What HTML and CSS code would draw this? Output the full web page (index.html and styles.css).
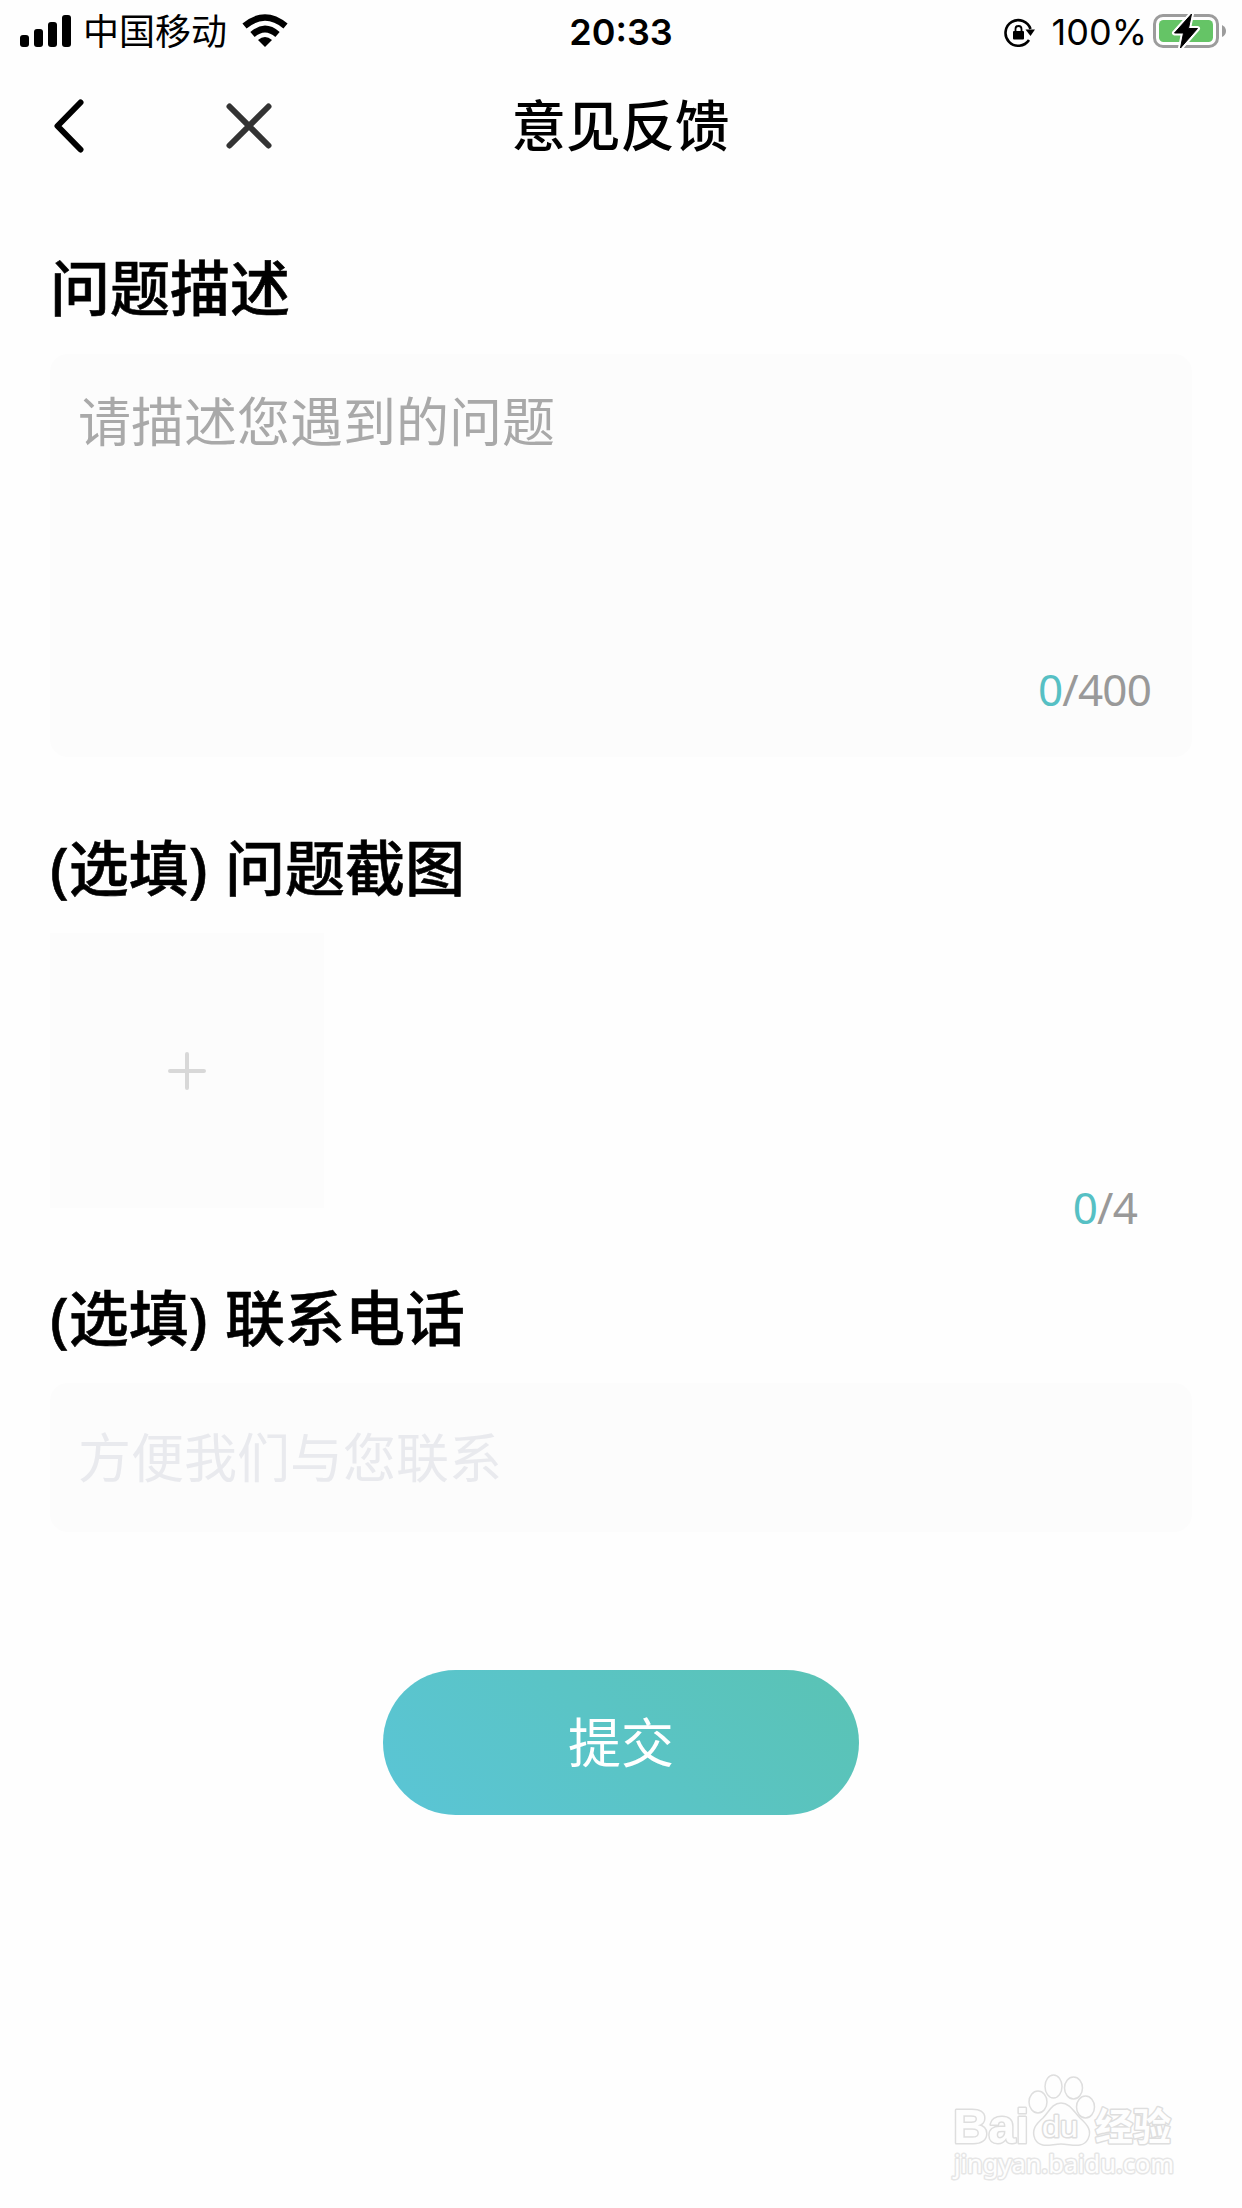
FILE: index.html
```html
<!DOCTYPE html>
<html lang="zh-CN">
<head>
    <meta charset="UTF-8">
    <meta name="viewport" content="width=device-width, initial-scale=1.0">
    <title>意见反馈</title>
    <link rel="stylesheet" href="styles.css">
</head>
<body>
    <div class="status-bar">
        <div class="status-left">
            <svg class="signal" width="51" height="32" viewBox="0 0 51 32">
                <rect x="0" y="20" width="9" height="12" rx="3"/>
                <rect x="14" y="14" width="9" height="18" rx="3"/>
                <rect x="28" y="7" width="9" height="25" rx="3"/>
                <rect x="42" y="0" width="9" height="32" rx="3"/>
            </svg>
            <span class="carrier">中国移动</span>
            <svg class="wifi" width="46" height="33" viewBox="0 0 46 33">
                <path d="M2.500 12 Q23 -5 43.500 12" fill="none" stroke="#000" stroke-width="6.500"/>
                <path d="M10.500 20.500 Q23 9.500 35.500 20.500" fill="none" stroke="#000" stroke-width="6.500"/>
                <path d="M16 26 Q23 20 30 26 L23 33 Z"/>
            </svg>
        </div>
        <span class="time">20:33</span>
        <div class="status-right">
            <svg class="lock" width="32" height="30" viewBox="0 0 32 30">
                <path d="M26.500 11 A12.800 12.800 0 1 0 25 22" fill="none" stroke="#000" stroke-width="2.600"/>
                <path d="M21.500 11.500 H31 L26.500 18 Z"/>
                <rect x="9" y="13" width="11" height="8.500" rx="1"/>
                <path d="M11.500 14 V11 Q11.500 8 14.500 8 Q17.500 8 17.500 11 V14" fill="none" stroke="#000" stroke-width="1.800"/>
            </svg>
            <span class="percent">100%</span>
            <svg class="battery" width="74" height="36" viewBox="0 0 74 36">
                <rect x="1.500" y="2.500" width="63" height="31" rx="8.500" fill="none" stroke="#9c9c9c" stroke-width="3"/>
                <rect x="6" y="7" width="54" height="22" rx="4.500" fill="#65c466"/>
                <path d="M69 12 Q73 14 73 18 Q73 22 69 24 Z" fill="#9c9c9c"/>
                <path d="M38.500 1 L21.500 20 H30.500 L27.500 35 L44.500 15.500 H35.500 Z" stroke="#fefefe" stroke-width="5" stroke-linejoin="round"/>
                <path d="M38.500 1 L21.500 20 H30.500 L27.500 35 L44.500 15.500 H35.500 Z" stroke="#000" stroke-width="1" stroke-linejoin="round"/>
            </svg>
        </div>
    </div>

    <header class="nav">
        <div class="nav-icons">
            <svg width="30" height="54" viewBox="0 0 30 54">
                <path d="M26.500 3.500 L3.500 27 L26.500 50.500" fill="none" stroke="#000" stroke-width="6" stroke-linecap="round" stroke-linejoin="round"/>
            </svg>
            <svg width="46" height="46" viewBox="0 0 46 46">
                <path d="M3.500 3.500 L42.500 42.500 M42.500 3.500 L3.500 42.500" fill="none" stroke="#333" stroke-width="6" stroke-linecap="round"/>
            </svg>
        </div>
        <h1>意见反馈</h1>
    </header>

    <main>
        <h2>问题描述</h2>
        <div class="box desc-box">
            <p class="placeholder">请描述您遇到的问题</p>
            <p class="count"><span>0</span>/400</p>
        </div>

        <h2 class="title-upload">(选填) 问题截图</h2>
        <div class="upload-row">
            <div class="upload">
                <svg width="38" height="38" viewBox="0 0 38 38">
                    <path d="M19 2 V36 M2 19 H36" stroke="#d8d8d8" stroke-width="4" stroke-linecap="round"/>
                </svg>
            </div>
            <p class="count"><span>0</span>/4</p>
        </div>

        <h2 class="title-phone">(选填) 联系电话</h2>
        <div class="box phone-box">
            <p class="placeholder light">方便我们与您联系</p>
        </div>

        <button class="submit">提交</button>
    </main>

    <svg class="watermark" width="240" height="120" viewBox="0 0 240 120">
        <g class="mark">
            <text class="mark-big" x="3" y="73" textLength="76" lengthAdjust="spacingAndGlyphs">Bai</text>
            <ellipse cx="88" cy="32" rx="9" ry="11"/>
            <ellipse cx="103.500" cy="16.500" rx="8.500" ry="11.500"/>
            <ellipse cx="123.500" cy="18" rx="9" ry="11"/>
            <ellipse cx="135.500" cy="37" rx="9" ry="11"/>
            <path d="M111 33 C120 33 124 42 130 48 C138 55 142 61 138 69 C133 79 121 74 111 74 C101 74 90 79 85 69 C81 60 86 54 93 48 C99 42 102 33 111 33 Z"/>
            <text class="mark-du" x="92" y="67" textLength="36" lengthAdjust="spacingAndGlyphs">du</text>
            <text class="mark-cn" x="145" y="70">经验</text>
            <text class="mark-url" x="4" y="103" textLength="220" lengthAdjust="spacingAndGlyphs">jingyan.baidu.com</text>
        </g>
    </svg>
</body>
</html>
```

FILE: styles.css
```css
* {
    box-sizing: border-box;
    margin: 0;
    padding: 0;
}
body {
    position: relative;
    height: 2208px;
    background-color: #fefefe;
    color: #000;
    font-family: "Noto Sans", "Noto Sans CJK SC", sans-serif;
}
.status-bar {
    display: grid;
    grid-template-columns: 1fr auto 1fr;
    align-items: center;
    height: 60px;
    padding: 0 15px 0 20px;
}
.status-left, .status-right {
    display: flex;
    align-items: center;
}
.status-right {
    justify-content: flex-end;
}
.carrier {
    margin: -4px 15px 0 12px;
    font-family: "Noto Sans CJK SC", sans-serif;
    font-size: 36px;
    line-height: 60px;
}
.wifi {
    margin-top: -1px;
}
.time {
    font-family: Inter, sans-serif;
    font-size: 36px;
    font-weight: 600;
    line-height: 60px;
    margin: 2px 5px 0 0;
}
.lock {
    margin: 3px 16px 0 0;
}
.percent {
    margin: 2px 6px 0 0;
    font-family: Inter, sans-serif;
    font-size: 36px;
    line-height: 60px;
}
.battery {
    margin-top: -1px;
}
.nav {
    display: grid;
    grid-template-columns: 1fr auto 1fr;
    align-items: center;
    height: 132px;
    padding: 0 53px 0 54px;
}
.nav-icons {
    display: flex;
    align-items: center;
    gap: 142px;
}
h1 {
    margin: -7px 0 0 -2px;
    font-family: "Noto Sans CJK SC", sans-serif;
    font-size: 54.5px;
    font-weight: 500;
    line-height: 80px;
}
main {
    padding: 58px 50px 0;
}
h2 {
    height: 104px;
    font-size: 60px;
    font-weight: 500;
    line-height: 76px;
    word-spacing: 2px;
    -webkit-text-stroke: 0.6px #000;
}
.box {
    background-color: #fcfcfc;
    border-radius: 18px;
}
.desc-box {
    display: flex;
    flex-direction: column;
    justify-content: space-between;
    height: 403px;
    padding: 30px 41px 36px 28px;
}
.placeholder {
    color: #a9a9a9;
    font-size: 53px;
    line-height: 76px;
}
.light {
    color: #e9eaee;
}
.count {
    color: #999;
    font-size: 44px;
    letter-spacing: -0.8px;
    line-height: 64px;
    text-align: right;
}
.count span {
    color: #56c0c4;
}
.title-upload {
    margin-top: 72px;
    line-height: 78px;
}
.upload-row {
    display: flex;
    justify-content: space-between;
    align-items: flex-end;
    height: 275px;
    padding-right: 55px;
}
.upload {
    display: flex;
    align-items: center;
    justify-content: center;
    width: 274px;
    height: 275px;
    background-color: #fcfcfc;
}
.upload-row .count {
    margin-bottom: -31px;
}
.title-phone {
    margin-top: 71px;
    line-height: 78px;
}
.phone-box {
    height: 149px;
    padding: 37px 28px;
}
.submit {
    display: block;
    width: 476px;
    height: 145px;
    margin: 138px auto 0;
    padding-bottom: 5px;
    border: none;
    border-radius: 73px;
    background: linear-gradient(45deg, #5ac5d6, #5ac3b4);
    color: #fff;
    font-family: "Noto Sans CJK SC", sans-serif;
    font-size: 53px;
}
.watermark {
    position: absolute;
    left: 950px;
    top: 2070px;
}
.mark {
    fill: #fefefe;
    stroke: #dedede;
    stroke-width: 1.5px;
    font-family: "Liberation Sans", sans-serif;
}
.mark text {
    paint-order: stroke;
    stroke-width: 3px;
    stroke-linejoin: round;
}
.mark-big {
    font-size: 49px;
    font-weight: bold;
}
.mark-du {
    font-size: 30px;
}
.mark-cn {
    font-family: "Noto Sans CJK SC", sans-serif;
    font-size: 38px;
    font-weight: bold;
}
.mark-url {
    font-family: "Noto Sans", sans-serif;
    font-size: 25px;
    stroke: #e6e6e6;
}
```
